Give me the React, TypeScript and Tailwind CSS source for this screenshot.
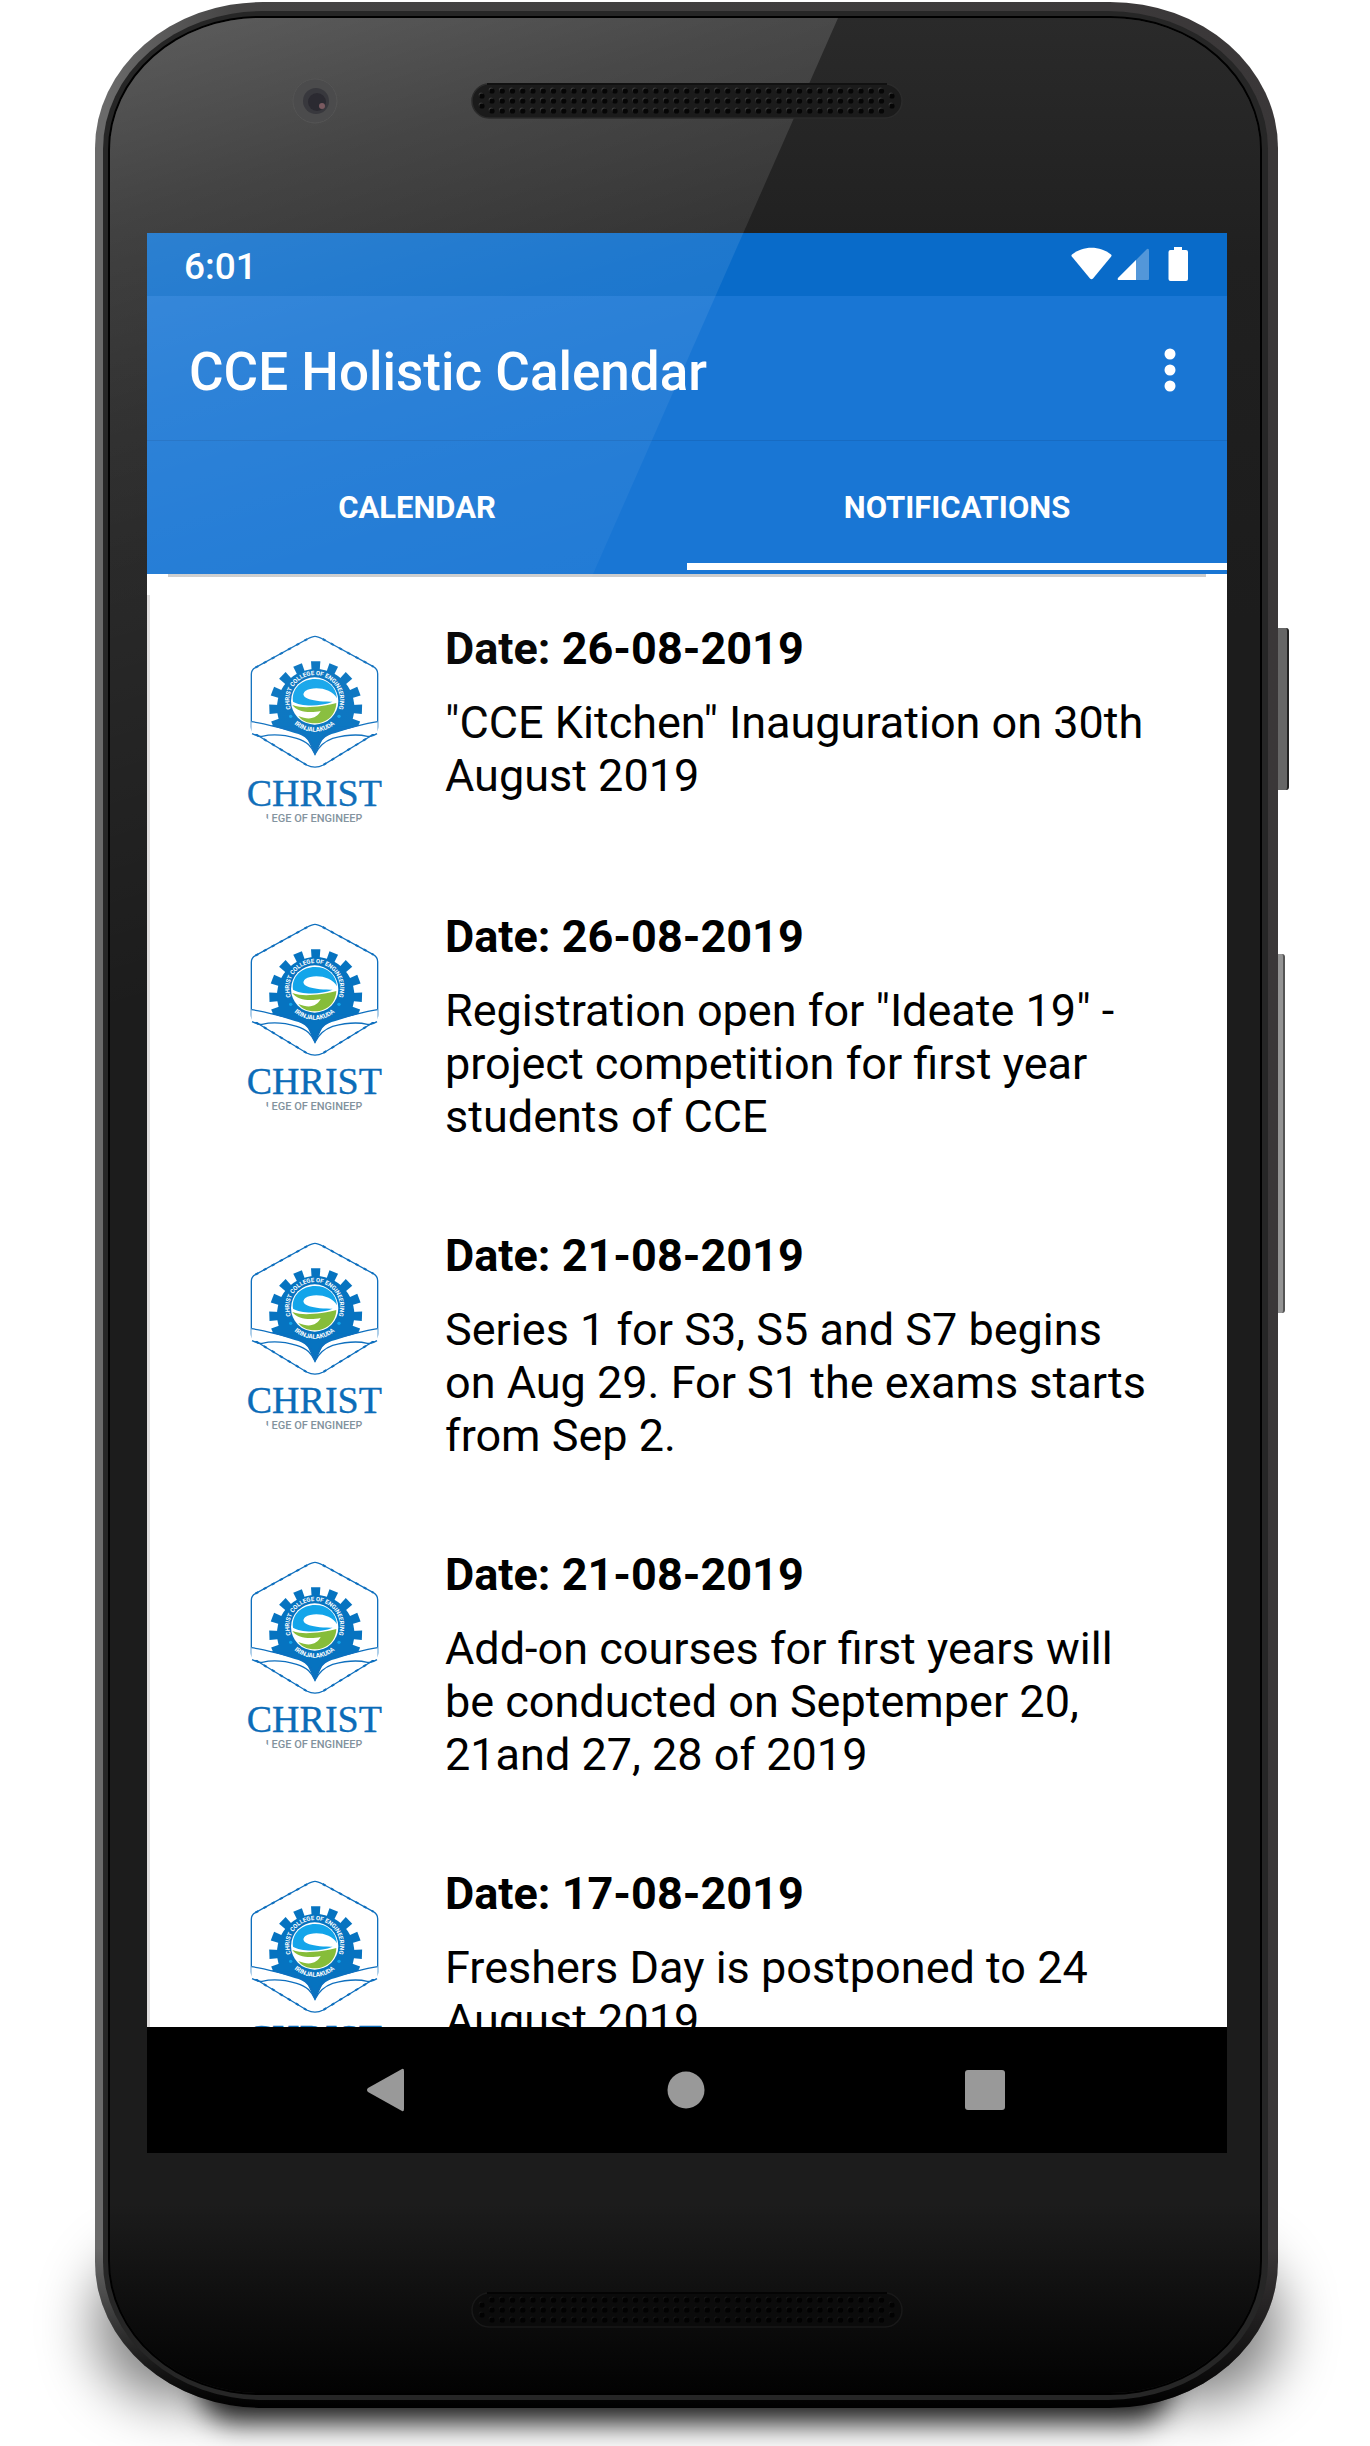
const notices = [
  { date: "26-08-2019", text: "\"CCE Kitchen\" Inauguration on 30th August 2019" },
  { date: "26-08-2019", text: "Registration open for \"Ideate 19\" - project competition for first year students of CCE" },
  { date: "21-08-2019", text: "Series 1 for S3, S5 and S7 begins on Aug 29. For S1 the exams starts from Sep 2." },
  { date: "21-08-2019", text: "Add-on courses for first years will be conducted on Septemper 20, 21and 27, 28 of 2019" },
  { date: "17-08-2019", text: "Freshers Day is postponed to 24 August 2019" },
];

const TEETH = [-90, -67, -44, -21, 2, 23, -113, -136, -159, -182, -203];

function CollegeLogo({ id }: { id: number }) {
  return (
    <svg viewBox="0 3 510 609" className="h-[203px] w-[170px] shrink-0" role="img" aria-label="Christ College of Engineering">
      <defs>
        <path id={"top" + id} d="M187 274 A76 76 0 1 1 321 274" />
        <path id={"bottom" + id} d="M178 292 A92 92 0 0 0 330 292" />
        <clipPath id={"cut" + id}><path d="M100 570 H406 V586 L372 606 H134 L100 586Z" /></clipPath>
      </defs>
      <path d="M255 46 Q263 46 278 54 L430 137 Q443 145 443 158 V318 Q443 330 432 339 L280 432 Q255 445 230 432 L76 339 Q64 331 64 318 V160 Q64 146 76 140 L232 54 Q247 46 255 46Z" fill="none" stroke="#0e6fbe" strokeWidth="4" />
      <path d="M278 54 L430 137 M432 339 L280 432 M230 432 L76 339 M76 140 L232 54" fill="none" stroke="#0e6fbe" strokeWidth="6" strokeDasharray="10 18" />
      <g fill="#0673c0">
        {TEETH.map((a) => (
          <path key={a} d="M-14 -139 H14 L12 -108 H-12Z" transform={`translate(257 260) rotate(${a + 90})`} />
        ))}
        <path d="M257 144 A116 116 0 0 1 364 305 L400 318 C350 322 300 318 282 345 L255 403 L228 345 C206 318 160 322 112 318 L150 305 A116 116 0 0 1 257 144Z" />
      </g>
      <path d="M64 300 C110 310 150 322 190 330 C222 336 240 355 255 392 C270 355 288 336 320 330 C360 322 400 310 443 300 V340 C400 335 350 338 300 345 C275 350 262 370 255 400 C248 370 235 350 208 345 C160 338 110 335 64 340Z" fill="#fff" />
      <path d="M130 316 H380 L316 336 C285 342 266 362 255 403 C244 362 226 342 194 336Z" fill="#0673c0" />
      <g fill="none" stroke="#0e6fbe" strokeWidth="4">
        <path d="M64 302 C110 308 150 322 190 329 C225 336 242 355 255 392 C268 355 285 336 320 329 C360 322 400 308 443 302" />
        <path d="M66 338 C80 344 88 348 96 346 C130 338 166 342 200 352 C232 362 244 376 255 400 C266 376 280 362 308 352 C346 342 380 338 412 346 C422 348 432 344 441 338" />
      </g>
      <circle cx="254" cy="240" r="71" fill="#fff" />
      <path d="M189 242 C184 200 218 174 255 174 C292 174 318 196 321 232 C306 200 248 194 226 210 C206 228 240 243 308 242 C270 258 210 256 189 242Z" fill="#13a5ea" />
      <path d="M187 252 C215 262 245 258 275 255 C295 252 308 249 319 246 C318 282 290 307 256 307 C230 307 214 298 205 285 C240 300 262 290 272 270 C245 276 203 276 187 252Z" fill="#86bd3a" />
      <circle cx="182" cy="286" r="5" fill="#13a5ea" />
      <circle cx="327" cy="286" r="5" fill="#13a5ea" />
      <g fill="#fff" fontFamily="Roboto, sans-serif" fontWeight="700" textAnchor="middle">
        <text fontSize="18"><textPath href={"#top" + id} startOffset="50%">CHRIST COLLEGE OF ENGINEERING</textPath></text>
        <text fontSize="19"><textPath href={"#bottom" + id} startOffset="50%">IRINJALAKUDA</textPath></text>
      </g>
      <text x="253" y="556" fontFamily="'Liberation Serif', serif" fontSize="114" textAnchor="middle" fill="#0b6cb8" stroke="#0b6cb8" strokeWidth="1">CHRIST</text>
      <text x="252" y="602" fontFamily="Roboto, sans-serif" fontSize="33" fontWeight="500" textAnchor="middle" fill="#82929d" clipPath={`url(#cut${id})`}>LEGE OF ENGINEER</text>
    </svg>
  );
}

function Speaker({ dim = false }: { dim?: boolean }) {
  const dots: [number, number][] = [[11, 13], [11, 23], [421, 13], [421, 23]];
  for (let c = 0; c < 39; c++) for (let r = 0; r < 3; r++) dots.push([21 + c * 10.25, 8 + r * 10]);
  return (
    <svg viewBox="0 0 432 36" className="relative z-10 h-9 w-[432px]" aria-hidden="true">
      <rect x="1" y="1" width="430" height="34" rx="17" fill={dim ? "#0b0b0b" : "#1b1b1b"} stroke={dim ? "#191919" : "#2b2b2b"} strokeWidth="1.5" />
      <path d="M16 1 H416" stroke={dim ? "#040404" : "#111"} strokeWidth="2" />
      {dots.map(([x, y], i) => (
        <g key={i}>
          <circle cx={x - 1} cy={y - 1} r="2.4" fill={dim ? "#161616" : "#3a3a3a"} />
          <circle cx={x} cy={y} r="2.6" fill={dim ? "#020202" : "#060606"} />
        </g>
      ))}
    </svg>
  );
}

function StatusIcons() {
  return (
    <svg viewBox="0 0 118 36" className="h-9 w-[118px]" fill="#fff" role="img" aria-label="Wi-Fi, mobile signal, battery full">
      <path d="M1 7.500 C12 -1.500 29 -1.500 40 7.500 Q41 8.500 40.200 9.500 L22 31.500 Q20.500 33 19 31.500 L0.800 9.500 Q0 8.500 1 7.500Z" />
      <path d="M76 2 Q78 1 78 4 V32 Q78 33 77 33 H48 Q46 33 47 31Z" opacity=".3" />
      <path d="M65 13 V33 H48 Q46 33 47 31Z" />
      <path d="M103 0 H111 V3 H115 Q117 3 117 5 V32 Q117 34 115 34 H99.500 Q97.500 34 97.500 32 V5 Q97.500 3 99.500 3 H103Z" />
    </svg>
  );
}

export default function App() {
  return (
    <main className="relative overflow-hidden bg-white pt-[2px] pr-[92px] pb-[38px] pl-[95px] font-[Roboto,sans-serif]">
      <div className="absolute right-[90px] bottom-[46px] left-[95px] h-[150px] rounded-[120px] bg-black/50 blur-[28px]" />
      <div className="absolute right-[200px] bottom-[24px] left-[200px] h-[70px] rounded-[35px] bg-black/85 blur-[14px]" />
      <div className="absolute top-[628px] right-[81px] h-[162px] w-[14px] rounded-r-[3px] border-r-2 border-[#222] bg-[#666]" />
      <div className="absolute top-[954px] right-[85px] h-[359px] w-[10px] rounded-r-[3px] border-r-2 border-[#555] bg-[#949494]" />

      <div className="relative rounded-[168px/146px] bg-linear-to-r from-[#6a6a6a] from-1% via-[#454444] via-12% to-[#3a3738] pt-[9px] pr-[10px] pb-[8px] pl-[8px]">
        <div className="absolute inset-x-0 bottom-0 h-[160px] rounded-b-[168px_146px] bg-linear-to-b from-transparent to-black" />
        <div className="relative rounded-[160px/138px] bg-[#262626] pt-[5px] pr-[6px] pb-[5px] pl-[5px]">
          <div className="relative flex flex-col overflow-hidden rounded-[152px/134px] border-2 border-black bg-[#1c1c1c]">
            <div className="absolute inset-x-0 top-0 h-[600px] bg-linear-to-b from-[#2a2a2a] via-[#202020] via-40% to-[#1c1c1c]" />
            <div className="absolute inset-x-0 bottom-0 h-[190px] bg-linear-to-b from-transparent to-[#020202]" />
            <div className="relative flex h-[215px] items-start justify-center pt-[65px] pl-[3px]">
              <svg viewBox="0 0 46 46" className="absolute top-[60px] left-[182px] z-10 size-[46px]" aria-hidden="true">
                <circle cx="23" cy="23" r="22" fill="#4b4b4c" stroke="#555" />
                <circle cx="24" cy="23" r="13" fill="#38383d" />
                <circle cx="25" cy="24" r="9" fill="#2b2a31" />
                <circle cx="30" cy="28" r="3" fill="#7a5a60" />
              </svg>
              <Speaker />
            </div>

            <div className="relative mr-[33px] ml-[37px] flex flex-col overflow-hidden bg-white">
              <header className="flex flex-col bg-[#1976d4] text-white">
                <div className="flex h-[63px] items-center justify-between bg-[#096bc9] pr-[38px] pl-[37px]">
                  <span className="pt-[5px] text-[37px] leading-[44px] font-medium">6:01</span>
                  <StatusIcons />
                </div>
                <div className="flex h-[145px] items-center justify-between border-b border-[#176bc2] pt-[3px] pr-[33px] pl-[42px]">
                  <h1 className="pt-[4px] text-[53px] leading-[62px] font-medium">CCE Holistic Calendar</h1>
                  <button aria-label="More options" className="flex w-[48px] justify-center">
                    <svg viewBox="0 0 12 44" className="h-[44px] w-[12px]" fill="#fff"><circle cx="6" cy="6" r="5.500" /><circle cx="6" cy="22" r="5.500" /><circle cx="6" cy="38" r="5.500" /></svg>
                  </button>
                </div>
                <nav className="grid h-[133px] grid-cols-2" role="tablist">
                  <button role="tab" aria-selected="false" className="pt-[1px] text-[31px] leading-[38px] font-bold">CALENDAR</button>
                  <button role="tab" aria-selected="true" className="relative pt-[1px] text-[31px] leading-[38px] font-bold">
                    NOTIFICATIONS
                    <span className="absolute inset-x-0 bottom-[4px] h-[7px] bg-white" />
                  </button>
                </nav>
              </header>
              <div className="mx-[21px] h-[3px] shrink-0 bg-[#ccc]" />
              <ul className="relative h-[1450px] overflow-hidden text-black">
                {notices.map((n, i) => (
                  <li key={i} className="flex items-start gap-[45px] pt-[45px] pr-[70px] pb-[40px] pl-[83px]">
                    <CollegeLogo id={i} />
                    <div className="flex flex-col gap-[21px] text-[45px] leading-[53px]">
                      <h2 className="font-bold">Date: {n.date}</h2>
                      <p className="pb-[1px]">{n.text}</p>
                    </div>
                  </li>
                ))}
              </ul>
              <div className="absolute top-[362px] bottom-[126px] left-0 w-[3px] bg-[#dfdddd]" />
              <nav className="flex h-[126px] items-center justify-between bg-black pr-[222px] pl-[219px]" aria-label="System">
                <button aria-label="Back"><svg viewBox="0 0 40 44" className="h-[44px] w-[40px]" fill="#999"><path d="M36 1 Q38 0 38 3 V41 Q38 44 36 43 L2 24 Q0 22 2 20Z" /></svg></button>
                <button aria-label="Home"><svg viewBox="0 0 38 38" className="size-[38px]" fill="#999"><circle cx="19" cy="19" r="18.500" /></svg></button>
                <button aria-label="Recent apps"><svg viewBox="0 0 40 40" className="size-[40px]" fill="#999"><rect width="40" height="40" rx="3" /></svg></button>
              </nav>
            </div>

            <div className="relative flex h-[240px] items-start justify-center pt-[139px] pl-[3px]">
              <Speaker dim />
            </div>

            <svg viewBox="0 0 1150 2372" preserveAspectRatio="none" className="pointer-events-none absolute inset-0 size-full" aria-hidden="true">
              <defs>
                <linearGradient id="glare" gradientUnits="userSpaceOnUse" x1="0" y1="0" x2="275" y2="917">
                  <stop offset="0" stopColor="#fff" stopOpacity=".24" />
                  <stop offset=".2" stopColor="#fff" stopOpacity=".15" />
                  <stop offset=".4" stopColor="#fff" stopOpacity=".09" />
                  <stop offset=".55" stopColor="#fff" stopOpacity=".06" />
                  <stop offset="1" stopColor="#fff" stopOpacity="0" />
                </linearGradient>
              </defs>
              <path d="M0 0 H728 L0 1650Z" fill="url(#glare)" />
            </svg>
          </div>
        </div>
      </div>
    </main>
  );
}
